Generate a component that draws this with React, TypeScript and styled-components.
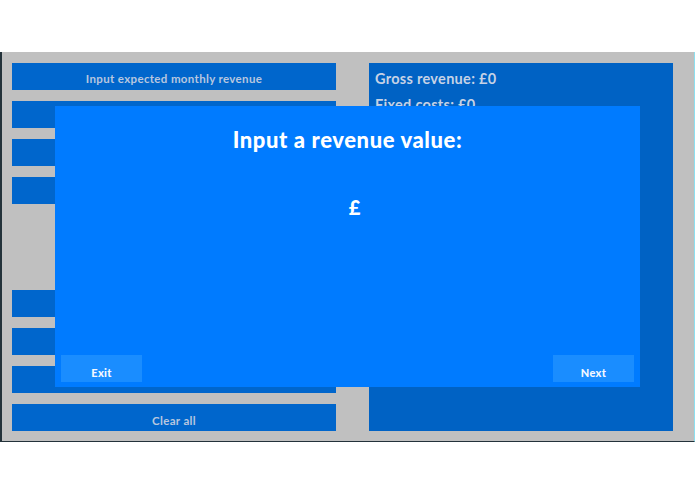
import * as React from 'react'
import styled, { createGlobalStyle } from 'styled-components'

const GlobalStyle = createGlobalStyle`
  html, body {
    margin: 0;
    padding: 0;
    background: #ffffff;
    font-family: 'Lato', 'Liberation Sans', sans-serif;
  }
`

const Page = styled.div`
  position: relative;
  width: 695px;
  height: 494px;
  padding-top: 52px;
  box-sizing: border-box;
`

const Frame = styled.div`
  display: flex;
  gap: 33px;
  height: 390px;
  box-sizing: border-box;
  padding: 11px 21px 10px 10px;
  background: #c0c0c0;
  border-left: 2px solid #23323a;
  border-bottom: 1px solid #23323a;
  border-right: 1px solid #8ce0f0;
`

const Column = styled.div`
  display: flex;
  flex-direction: column;
  gap: 11px;
  width: 324px;
`

const Row = styled.div<{ $hidden?: boolean }>`
  height: 27px;
  display: flex;
  align-items: center;
  justify-content: center;
  box-sizing: border-box;
  padding-top: 5px;
  background: ${(p) => (p.$hidden ? 'transparent' : '#0066cc')};
  color: #b8c7df;
  font-size: 11.5px;
  font-weight: 700;
  letter-spacing: 0.35px;
`

const Summary = styled.div`
  flex: 1;
  background: #0062c4;
  padding: 7px 6px;
  display: flex;
  flex-direction: column;
  gap: 8px;
`

const SummaryLine = styled.div`
  color: #c6d2e6;
  font-size: 14.5px;
  font-weight: 700;
  line-height: 18px;
  letter-spacing: 0.3px;
`

const Modal = styled.div`
  position: absolute;
  left: 55px;
  top: 106px;
  width: 585px;
  height: 281px;
  background: #007bff;
  display: flex;
  flex-direction: column;
  align-items: center;
  box-sizing: border-box;
  padding: 21px 6px 5px;
  color: #ffffff;
`

const Title = styled.div`
  font-size: 22px;
  font-weight: 900;
  line-height: 26px;
  letter-spacing: 0.6px;
`

const Amount = styled.div`
  margin-top: 43px;
  margin-left: 14px;
  font-size: 20px;
  font-weight: 900;
  line-height: 22px;
`

const Actions = styled.div`
  margin-top: auto;
  align-self: stretch;
  display: flex;
  justify-content: space-between;
`

const ActionButton = styled.div`
  width: 81px;
  height: 27px;
  background: #1a8dff;
  display: flex;
  align-items: center;
  justify-content: center;
  padding-top: 7px;
  box-sizing: border-box;
  font-size: 11px;
  font-weight: 900;
  letter-spacing: 0.3px;
  color: #f4f8ff;
`

const rows = [
  'Input expected monthly revenue',
  '',
  '',
  '',
  null,
  null,
  '',
  '',
  '',
  'Clear all',
]

export default function App() {
  return (
    <Page>
      <GlobalStyle />
      <Frame>
        <Column>
          {rows.map((label, i) => (
            <Row key={i} $hidden={label === null}>
              {label}
            </Row>
          ))}
        </Column>
        <Summary>
          <SummaryLine>Gross revenue: £0</SummaryLine>
          <SummaryLine>Fixed costs: £0</SummaryLine>
        </Summary>
      </Frame>
      <Modal>
        <Title>Input a revenue value:</Title>
        <Amount>£</Amount>
        <Actions>
          <ActionButton>Exit</ActionButton>
          <ActionButton>Next</ActionButton>
        </Actions>
      </Modal>
    </Page>
  )
}
